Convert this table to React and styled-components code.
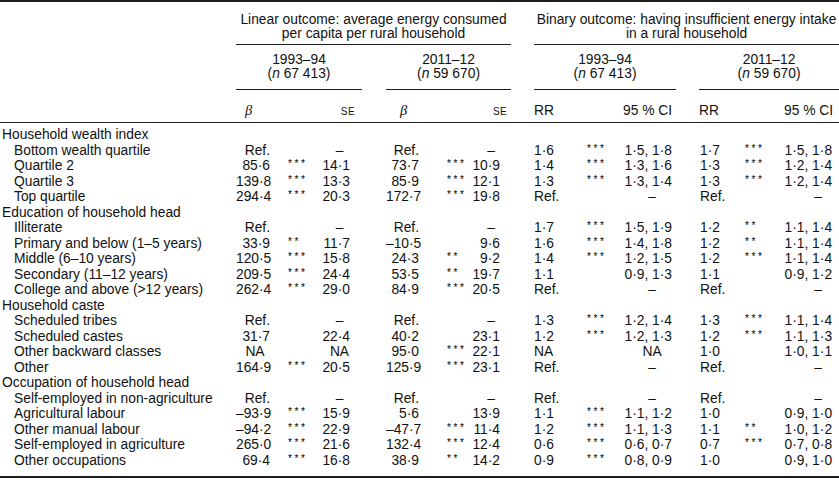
import React, { Fragment } from "react";
import styled, { createGlobalStyle } from "styled-components";

const GlobalStyle = createGlobalStyle`
  html, body { margin: 0; padding: 0; background: #ffffff; }
  body {
    font-family: "Liberation Sans", Arial, Helvetica, sans-serif;
    color: #111111;
  }
`;

const Table = styled.table`
  width: 839px;
  table-layout: fixed;
  border-collapse: separate;
  border-spacing: 0;
  border-top: 2px solid #1e1e1e;
  border-bottom: 2px solid #1e1e1e;
  font-size: 13.8px;
`;

const Col = styled.col`
  width: ${(p) => p.$w}px;
`;

const HeadCell = styled.th`
  font-weight: normal;
  text-align: center;
  white-space: nowrap;
  padding: 0;
  vertical-align: top;
  border-bottom: ${(p) => (p.$rule ? "1px solid #1e1e1e" : "0")};
`;

const GroupHead = styled(HeadCell)`
  padding-top: 11px;
  padding-bottom: 3px;
  line-height: 14px;
`;

const PeriodHead = styled(HeadCell)`
  padding-top: 8px;
  padding-bottom: 8px;
  line-height: 14px;
`;

const ColHead = styled(HeadCell)`
  padding-top: 14px;
  padding-bottom: 4px;
  line-height: 13px;
  border-bottom: 1px solid #1e1e1e;
  text-align: ${(p) => p.$align || "left"};
  padding-left: ${(p) => p.$padL || 0}px;
  padding-right: ${(p) => p.$padR || 0}px;
`;

const Beta = styled.span`
  font-family: "Liberation Serif", "Times New Roman", serif;
  font-style: italic;
  font-size: 14.5px;
`;

const SmallCaps = styled.span`
  font-size: 10px;
  letter-spacing: 0.4px;
`;

const Ital = styled.i`
  font-style: italic;
`;

const Body = styled.tbody`
  tr:first-child > td { padding-top: 4px; }
  tr:last-child > td { padding-bottom: 8px; }
`;

const Cell = styled.td`
  padding: 0;
  line-height: 15.5px;
  white-space: nowrap;
  overflow: visible;
`;

const Label = styled(Cell)`
  padding-left: ${(p) => (p.$sub ? 14 : 2)}px;
`;

const Value = styled(Cell)`
  text-align: ${(p) => p.$align};
  padding-left: ${(p) => p.$padL || 0}px;
  padding-right: ${(p) => p.$padR || 0}px;
`;

const StarCell = styled(Cell)`
  padding-left: ${(p) => p.$padL}px;
`;

const Stars = styled.span`
  font-size: 10px;
  letter-spacing: 2.6px;
  vertical-align: 3px;
  line-height: 0;
  color: #000;
`;

const groups = [
  {
    est: { w: 38, align: "right", padR: 4, headPadL: 9, naCenter: true },
    star: { w: 38, padL: 14 },
    range: { w: 50, align: "right", padR: 12, specPadL: 5, headPadR: 7 },
    estHead: "beta",
    rangeHead: "se",
  },
  {
    est: { w: 38, align: "right", padR: 5, headPadL: 14, naCenter: true },
    star: { w: 38, padL: 23 },
    range: { w: 49, align: "right", padR: 11, specPadL: 9, headPadR: 4 },
    estHead: "beta",
    rangeHead: "se",
  },
  {
    est: { w: 41, align: "left", padL: 0, headPadL: 0 },
    star: { w: 45, padL: 12 },
    range: { w: 56, align: "right", padR: 4, specPadL: 8, headPadR: 4 },
    estHead: "rr",
    rangeHead: "ci",
  },
  {
    est: { w: 41, align: "left", padL: 1, headPadL: 0 },
    star: { w: 35, padL: 5 },
    range: { w: 64, align: "right", padR: 7, specPadL: 22, headPadR: 6 },
    estHead: "rr",
    rangeHead: "ci",
  },
];

const gapWidths = [24, 23, 23];

const sections = [
  {
    title: "Household wealth index",
    rows: [
      ["Bottom wealth quartile", "Ref.", "", "–", "Ref.", "", "–", "1·6", "***", "1·5, 1·8", "1·7", "***", "1·5, 1·8"],
      ["Quartile 2", "85·6", "***", "14·1", "73·7", "***", "10·9", "1·4", "***", "1·3, 1·6", "1·3", "***", "1·2, 1·4"],
      ["Quartile 3", "139·8", "***", "13·3", "85·9", "***", "12·1", "1·3", "***", "1·3, 1·4", "1·3", "***", "1·2, 1·4"],
      ["Top quartile", "294·4", "***", "20·3", "172·7", "***", "19·8", "Ref.", "", "–", "Ref.", "", "–"],
    ],
  },
  {
    title: "Education of household head",
    rows: [
      ["Illiterate", "Ref.", "", "–", "Ref.", "", "–", "1·7", "***", "1·5, 1·9", "1·2", "**", "1·1, 1·4"],
      ["Primary and below (1–5 years)", "33·9", "**", "11·7", "–10·5", "", "9·6", "1·6", "***", "1·4, 1·8", "1·2", "**", "1·1, 1·4"],
      ["Middle (6–10 years)", "120·5", "***", "15·8", "24·3", "**", "9·2", "1·4", "***", "1·2, 1·5", "1·2", "***", "1·1, 1·4"],
      ["Secondary (11–12 years)", "209·5", "***", "24·4", "53·5", "**", "19·7", "1·1", "", "0·9, 1·3", "1·1", "", "0·9, 1·2"],
      ["College and above (>12 years)", "262·4", "***", "29·0", "84·9", "***", "20·5", "Ref.", "", "–", "Ref.", "", "–"],
    ],
  },
  {
    title: "Household caste",
    rows: [
      ["Scheduled tribes", "Ref.", "", "–", "Ref.", "", "–", "1·3", "***", "1·2, 1·4", "1·3", "***", "1·1, 1·4"],
      ["Scheduled castes", "31·7", "", "22·4", "40·2", "", "23·1", "1·2", "***", "1·2, 1·3", "1·2", "***", "1·1, 1·3"],
      ["Other backward classes", "NA", "", "NA", "95·0", "***", "22·1", "NA", "", "NA", "1·0", "", "1·0, 1·1"],
      ["Other", "164·9", "***", "20·5", "125·9", "***", "23·1", "Ref.", "", "–", "Ref.", "", "–"],
    ],
  },
  {
    title: "Occupation of household head",
    rows: [
      ["Self-employed in non-agriculture", "Ref.", "", "–", "Ref.", "", "–", "Ref.", "", "–", "Ref.", "", "–"],
      ["Agricultural labour", "–93·9", "***", "15·9", "5·6", "", "13·9", "1·1", "***", "1·1, 1·2", "1·0", "", "0·9, 1·0"],
      ["Other manual labour", "–94·2", "***", "22·9", "–47·7", "***", "11·4", "1·2", "***", "1·1, 1·3", "1·1", "**", "1·0, 1·2"],
      ["Self-employed in agriculture", "265·0", "***", "21·6", "132·4", "***", "12·4", "0·6", "***", "0·6, 0·7", "0·7", "***", "0·7, 0·8"],
      ["Other occupations", "69·4", "***", "16·8", "38·9", "**", "14·2", "0·9", "***", "0·8, 0·9", "1·0", "", "0·9, 1·0"],
    ],
  },
];

const isSpecial = (v) => v === "–" || v === "NA";

function EstCell({ cfg, value }) {
  if (value === "NA" && cfg.naCenter) {
    return <Value $align="center">{value}</Value>;
  }
  return (
    <Value $align={cfg.align} $padL={cfg.padL} $padR={cfg.padR}>
      {value}
    </Value>
  );
}

function RangeCell({ cfg, value }) {
  if (isSpecial(value)) {
    return (
      <Value $align="center" $padL={cfg.specPadL}>
        {value}
      </Value>
    );
  }
  return (
    <Value $align={cfg.align} $padR={cfg.padR}>
      {value}
    </Value>
  );
}

function DataRow({ row }) {
  const [label, ...vals] = row;
  return (
    <tr>
      <Label $sub>{label}</Label>
      {groups.map((g, gi) => (
        <Fragment key={gi}>
          {gi > 0 && <Cell />}
          <EstCell cfg={g.est} value={vals[gi * 3]} />
          <StarCell $padL={g.star.padL}>
            {vals[gi * 3 + 1] && <Stars>{vals[gi * 3 + 1]}</Stars>}
          </StarCell>
          <RangeCell cfg={g.range} value={vals[gi * 3 + 2]} />
        </Fragment>
      ))}
    </tr>
  );
}

function SectionRow({ title }) {
  return (
    <tr>
      <Label>{title}</Label>
      <Cell colSpan={15} />
    </tr>
  );
}

const periods = [
  { year: "1993–94", n: "67 413" },
  { year: "2011–12", n: "59 670" },
  { year: "1993–94", n: "67 413" },
  { year: "2011–12", n: "59 670" },
];

export default function App() {
  return (
    <>
      <GlobalStyle />
      <Table>
        <colgroup>
          <Col $w={236} />
          {groups.map((g, gi) => (
            <Fragment key={gi}>
              {gi > 0 && <Col $w={gapWidths[gi - 1]} />}
              <Col $w={g.est.w} />
              <Col $w={g.star.w} />
              <Col $w={g.range.w} />
            </Fragment>
          ))}
        </colgroup>
        <thead>
          <tr>
            <GroupHead />
            <GroupHead colSpan={7} $rule>
              Linear outcome: average energy consumed
              <br />
              per capita per rural household
            </GroupHead>
            <GroupHead />
            <GroupHead colSpan={7} $rule>
              Binary outcome: having insufficient energy intake
              <br />
              in a rural household
            </GroupHead>
          </tr>
          <tr>
            <PeriodHead />
            {periods.map((p, pi) => (
              <Fragment key={pi}>
                {pi > 0 && <PeriodHead />}
                <PeriodHead colSpan={3} $rule>
                  {p.year}
                  <br />(<Ital>n</Ital> {p.n})
                </PeriodHead>
              </Fragment>
            ))}
          </tr>
          <tr>
            <ColHead />
            {groups.map((g, gi) => (
              <Fragment key={gi}>
                {gi > 0 && <ColHead />}
                <ColHead $padL={g.est.headPadL}>
                  {g.estHead === "beta" ? <Beta>β</Beta> : "RR"}
                </ColHead>
                <ColHead />
                <ColHead $align="right" $padR={g.range.headPadR}>
                  {g.rangeHead === "se" ? <SmallCaps>SE</SmallCaps> : "95 % CI"}
                </ColHead>
              </Fragment>
            ))}
          </tr>
        </thead>
        <Body>
          {sections.map((s) => (
            <Fragment key={s.title}>
              <SectionRow title={s.title} />
              {s.rows.map((r) => (
                <DataRow key={r[0]} row={r} />
              ))}
            </Fragment>
          ))}
        </Body>
      </Table>
    </>
  );
}
